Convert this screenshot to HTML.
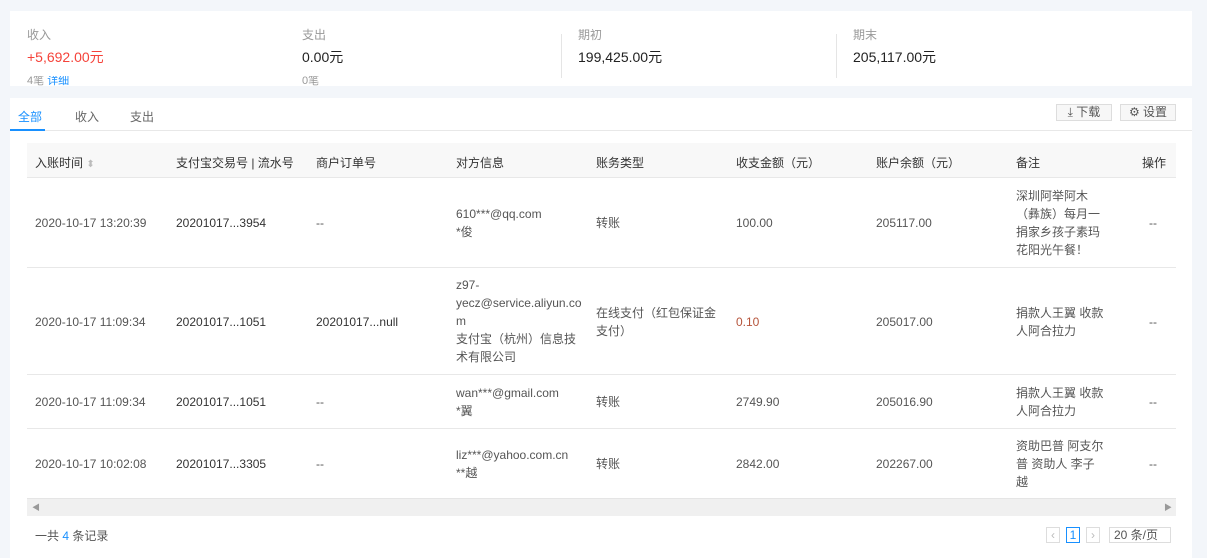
<!DOCTYPE html>
<html><head><meta charset="utf-8"><style>
*{margin:0;padding:0;box-sizing:border-box}
body{width:1207px;height:551px;background:#f3f6fa;font-family:"Liberation Sans","Noto Sans CJK SC",sans-serif;font-size:12px;color:#333;position:relative;overflow:hidden}
.card{position:absolute;background:#fff;left:10px;width:1182px}
.abs{position:absolute;white-space:nowrap}
.lbl{color:#999;font-size:12px}
.val{font-size:14px;color:#222}
.tab{position:absolute;top:108px;font-size:12px;color:#666}
.btn{position:absolute;top:104px;height:17px;border:1px solid #ddd;background:#f7f7f7;color:#555;font-size:12px;line-height:15px;text-align:center}
.th{position:absolute;top:154px;color:#333}
.cell{position:absolute;color:#555;line-height:18px}
.hl{position:absolute;left:27px;width:1149px;height:1px;background:#e8e8e8}
</style></head><body>
<div class="card" style="top:11px;height:75px"></div>
<div class="abs lbl" style="left:27px;top:26px">收入</div>
<div class="abs" style="left:27px;top:47px;font-size:14px;color:#f5433a">+5,692.00元</div>
<div class="abs" style="left:27px;top:76px;height:10px;overflow:hidden;color:#999;font-size:11px;line-height:11px">4笔 <span style="color:#1890ff">详细</span></div>
<div class="abs lbl" style="left:302px;top:26px">支出</div>
<div class="abs val" style="left:302px;top:47px">0.00元</div>
<div class="abs" style="left:302px;top:76px;height:10px;overflow:hidden;color:#999;font-size:11px;line-height:11px">0笔</div>
<div class="abs" style="left:561px;top:34px;width:1px;height:44px;background:#e5e5e5"></div>
<div class="abs lbl" style="left:578px;top:26px">期初</div>
<div class="abs val" style="left:578px;top:47px">199,425.00元</div>
<div class="abs" style="left:836px;top:34px;width:1px;height:44px;background:#e5e5e5"></div>
<div class="abs lbl" style="left:853px;top:26px">期末</div>
<div class="abs val" style="left:853px;top:47px">205,117.00元</div>

<div class="card" style="top:98px;height:460px"></div>
<div class="tab" style="left:18px;color:#1890ff">全部</div>
<div class="abs" style="left:10px;top:129px;width:35px;height:2px;background:#1890ff"></div>
<div class="tab" style="left:75px">收入</div>
<div class="tab" style="left:130px">支出</div>
<div class="abs" style="left:45px;top:130px;width:1147px;height:1px;background:#e8e8e8"></div>
<div class="btn" style="left:1056px;width:56px">⤓ 下载</div>
<div class="btn" style="left:1120px;width:56px">⚙ 设置</div>

<div class="abs" style="left:27px;top:143px;width:1149px;height:35px;background:#f8f8f8"></div>
<div class="hl" style="top:177px"></div>
<div class="th" style="left:35px">入账时间 <span style="color:#bbb;font-size:10px">⬍</span></div>
<div class="th" style="left:176px">支付宝交易号 | 流水号</div>
<div class="th" style="left:316px">商户订单号</div>
<div class="th" style="left:456px">对方信息</div>
<div class="th" style="left:596px">账务类型</div>
<div class="th" style="left:736px">收支金额（元）</div>
<div class="th" style="left:876px">账户余额（元）</div>
<div class="th" style="left:1016px">备注</div>
<div class="th" style="left:1142px">操作</div>

<div class="cell" style="left:35px;top:214px">2020-10-17 13:20:39</div>
<div class="cell" style="left:176px;top:214px;color:#333">20201017...3954</div>
<div class="cell" style="left:316px;top:214px">--</div>
<div class="cell" style="left:456px;top:205px">610***@qq.com<br>*俊</div>
<div class="cell" style="left:596px;top:214px">转账</div>
<div class="cell" style="left:736px;top:214px">100.00</div>
<div class="cell" style="left:876px;top:214px">205117.00</div>
<div class="cell" style="left:1016px;top:187px;white-space:nowrap">深圳阿举阿木<br>（彝族）每月一<br>捐家乡孩子素玛<br>花阳光午餐！</div>
<div class="cell" style="left:1149px;top:214px">--</div>
<div class="hl" style="top:267px"></div>

<div class="cell" style="left:35px;top:313px">2020-10-17 11:09:34</div>
<div class="cell" style="left:176px;top:313px;color:#333">20201017...1051</div>
<div class="cell" style="left:316px;top:313px;color:#333">20201017...null</div>
<div class="cell" style="left:456px;top:276px;white-space:nowrap">z97-<br>yecz@service.aliyun.co<br>m<br>支付宝（杭州）信息技<br>术有限公司</div>
<div class="cell" style="left:596px;top:304px;white-space:nowrap">在线支付（红包保证金<br>支付）</div>
<div class="cell" style="left:736px;top:313px;color:#b5533a">0.10</div>
<div class="cell" style="left:876px;top:313px">205017.00</div>
<div class="cell" style="left:1016px;top:304px;white-space:nowrap">捐款人王翼 收款<br>人阿合拉力</div>
<div class="cell" style="left:1149px;top:313px">--</div>
<div class="hl" style="top:374px"></div>

<div class="cell" style="left:35px;top:393px">2020-10-17 11:09:34</div>
<div class="cell" style="left:176px;top:393px;color:#333">20201017...1051</div>
<div class="cell" style="left:316px;top:393px">--</div>
<div class="cell" style="left:456px;top:384px">wan***@gmail.com<br>*翼</div>
<div class="cell" style="left:596px;top:393px">转账</div>
<div class="cell" style="left:736px;top:393px">2749.90</div>
<div class="cell" style="left:876px;top:393px">205016.90</div>
<div class="cell" style="left:1016px;top:384px;white-space:nowrap">捐款人王翼 收款<br>人阿合拉力</div>
<div class="cell" style="left:1149px;top:393px">--</div>
<div class="hl" style="top:428px"></div>

<div class="cell" style="left:35px;top:455px">2020-10-17 10:02:08</div>
<div class="cell" style="left:176px;top:455px;color:#333">20201017...3305</div>
<div class="cell" style="left:316px;top:455px">--</div>
<div class="cell" style="left:456px;top:446px">liz***@yahoo.com.cn<br>**越</div>
<div class="cell" style="left:596px;top:455px">转账</div>
<div class="cell" style="left:736px;top:455px">2842.00</div>
<div class="cell" style="left:876px;top:455px">202267.00</div>
<div class="cell" style="left:1016px;top:437px;white-space:nowrap">资助巴普 阿支尔<br>普 资助人 李子<br>越</div>
<div class="cell" style="left:1149px;top:455px">--</div>

<div class="abs" style="left:27px;top:498px;width:1149px;height:18px;background:#f0f0f0;border-top:1px solid #e5e5e5"></div>
<div class="abs" style="left:32px;top:502px;color:#999;font-size:8px">◀</div>
<div class="abs" style="left:1164px;top:502px;color:#999;font-size:8px">▶</div>

<div class="abs" style="left:35px;top:527px;color:#555">一共 <span style="color:#1890ff">4</span> 条记录</div>
<div class="abs" style="left:1046px;top:527px;width:14px;height:16px;border:1px solid #ddd;color:#bbb;text-align:center;line-height:14px">‹</div>
<div class="abs" style="left:1066px;top:527px;width:14px;height:16px;border:1px solid #1890ff;color:#1890ff;text-align:center;line-height:14px">1</div>
<div class="abs" style="left:1086px;top:527px;width:14px;height:16px;border:1px solid #ddd;color:#bbb;text-align:center;line-height:14px">›</div>
<div class="abs" style="left:1109px;top:527px;width:62px;height:16px;border:1px solid #ddd;color:#555;line-height:14px;padding-left:4px">20 条/页</div>
</body></html>
